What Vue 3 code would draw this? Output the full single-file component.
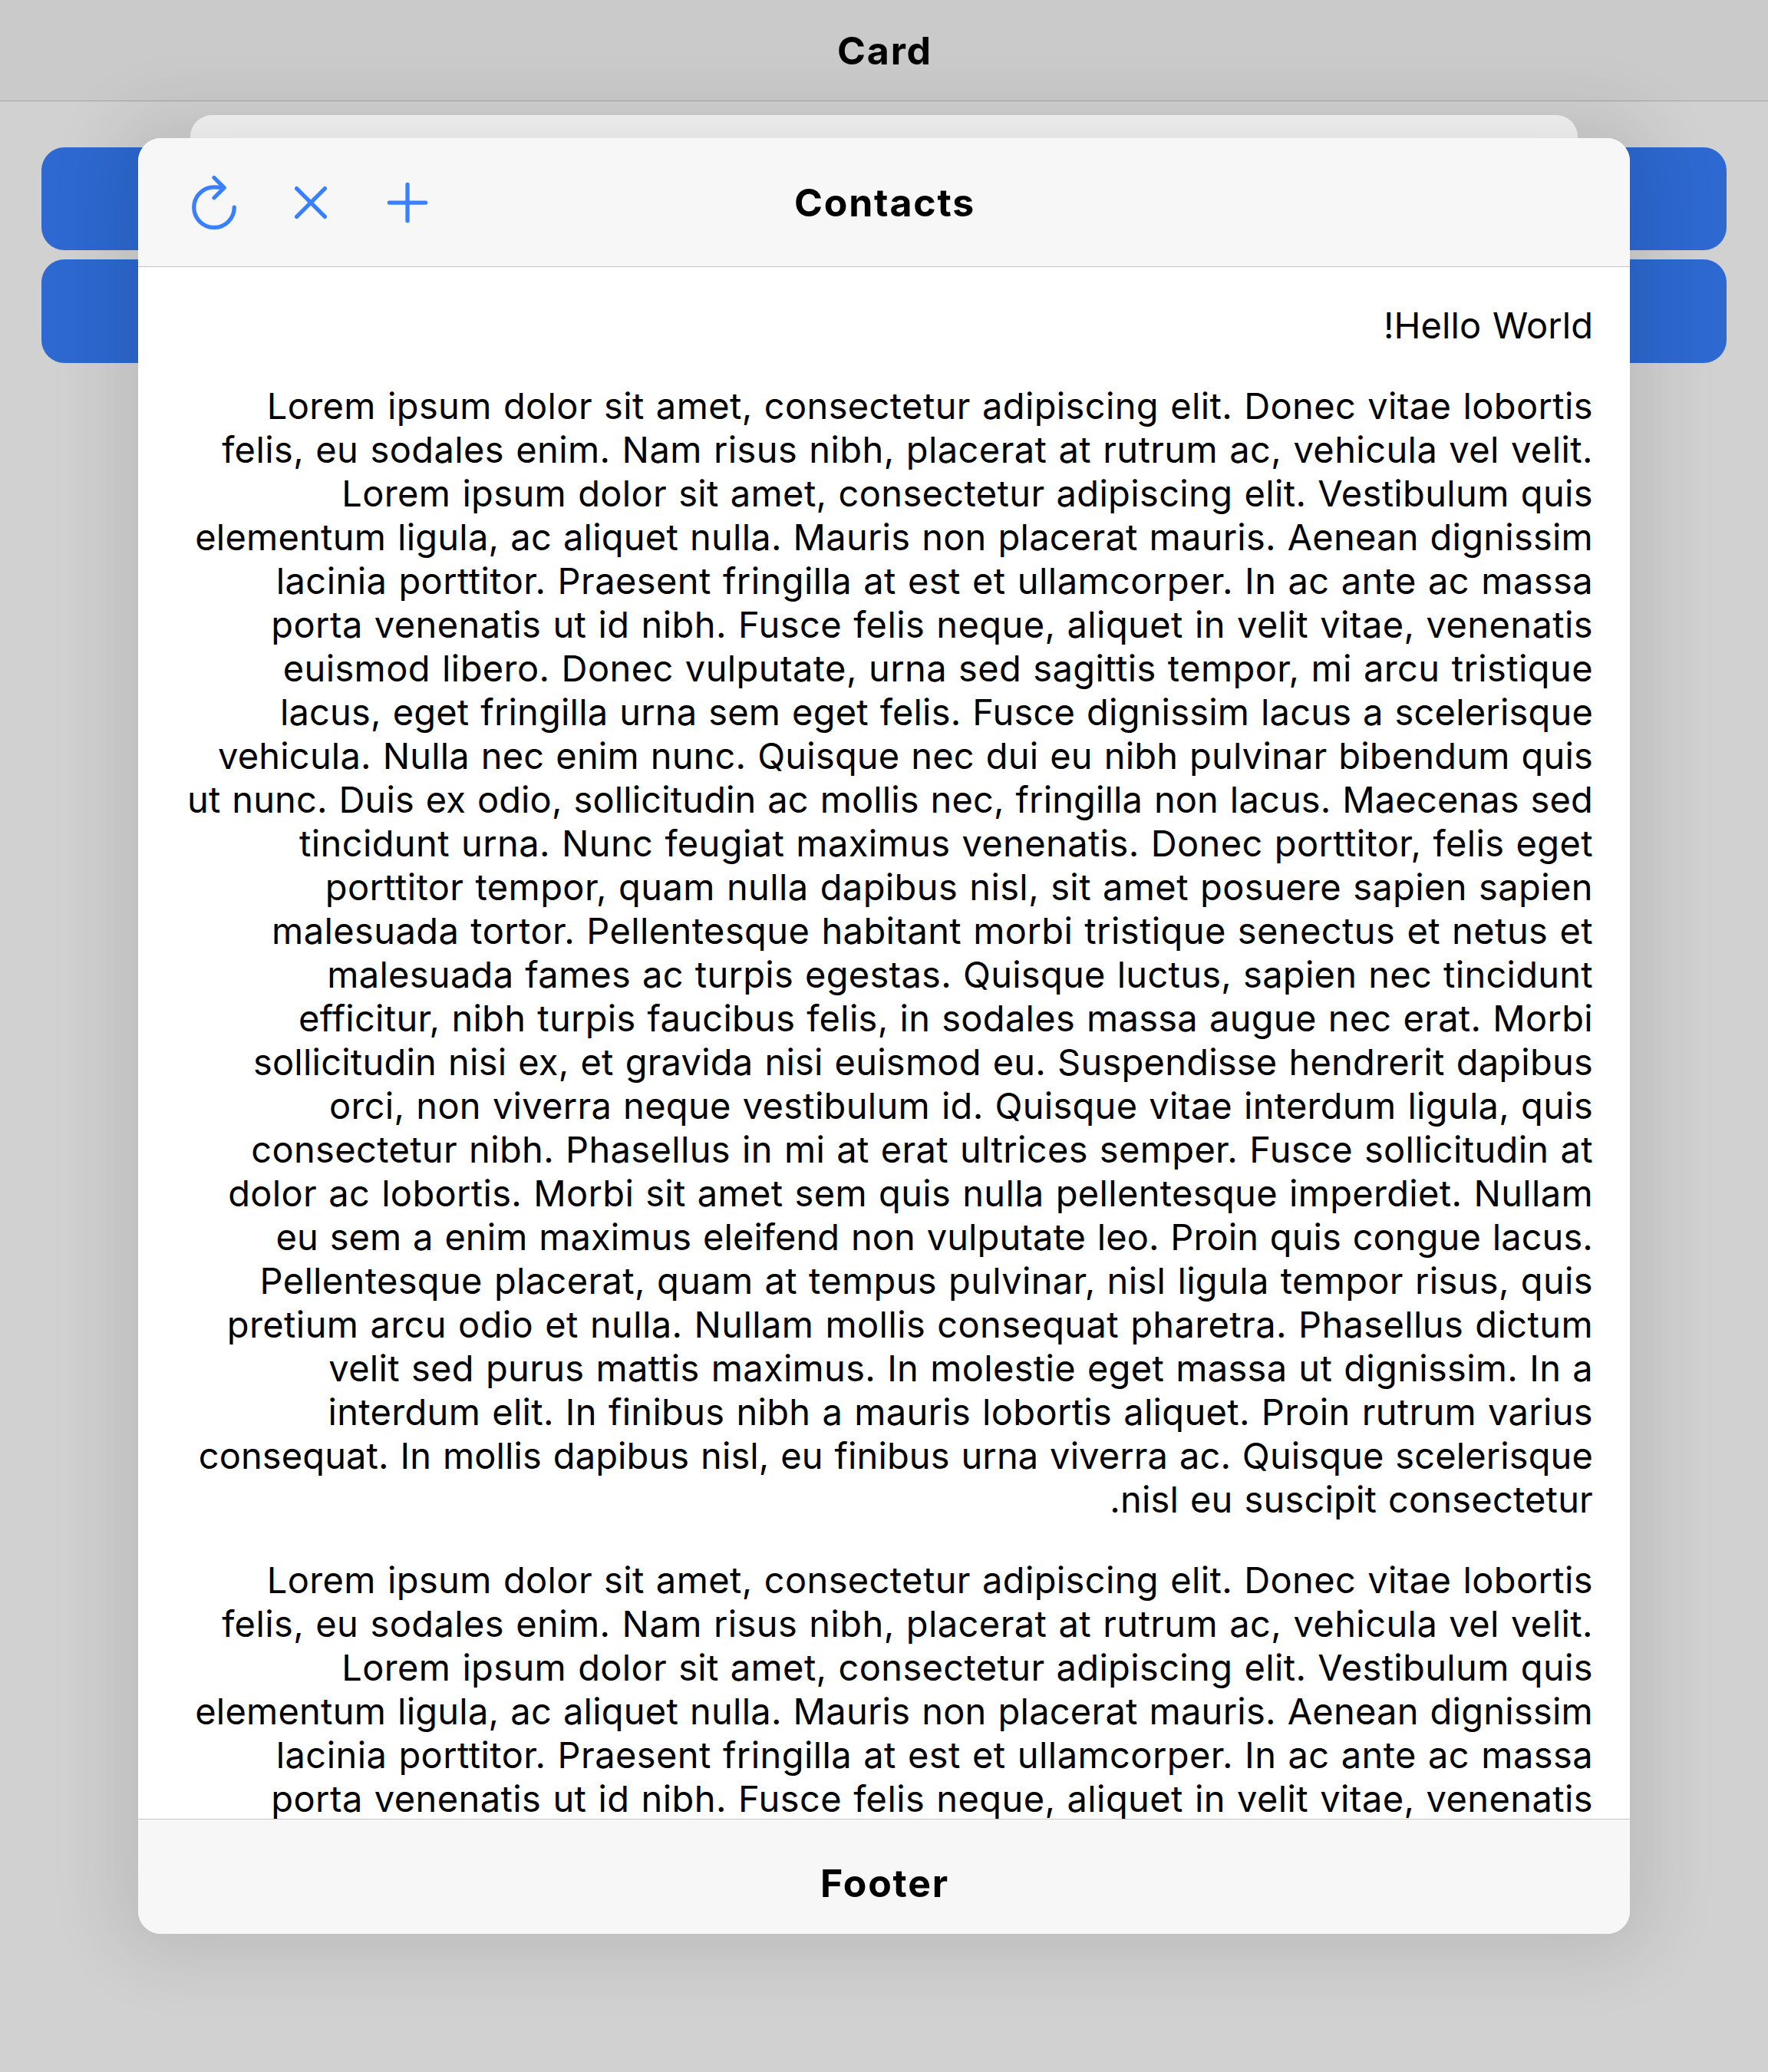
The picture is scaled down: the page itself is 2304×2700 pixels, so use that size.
<script setup>
// Each line carries its own tracking, in pixels.
const lines = [
  [0.375, 'Lorem ipsum dolor sit amet, consectetur adipiscing elit. Donec vitae lobortis'],
  [0.41, 'felis, eu sodales enim. Nam risus nibh, placerat at rutrum ac, vehicula vel velit.'],
  [0.35, 'Lorem ipsum dolor sit amet, consectetur adipiscing elit. Vestibulum quis'],
  [0.23, 'elementum ligula, ac aliquet nulla. Mauris non placerat mauris. Aenean dignissim'],
  [0.425, 'lacinia porttitor. Praesent fringilla at est et ullamcorper. In ac ante ac massa'],
  [0.405, 'porta venenatis ut id nibh. Fusce felis neque, aliquet in velit vitae, venenatis'],
  [0.4, 'euismod libero. Donec vulputate, urna sed sagittis tempor, mi arcu tristique'],
  [0.185, 'lacus, eget fringilla urna sem eget felis. Fusce dignissim lacus a scelerisque'],
  [0.185, 'vehicula. Nulla nec enim nunc. Quisque nec dui eu nibh pulvinar bibendum quis'],
  [0.13, 'ut nunc. Duis ex odio, sollicitudin ac mollis nec, fringilla non lacus. Maecenas sed'],
  [0.38, 'tincidunt urna. Nunc feugiat maximus venenatis. Donec porttitor, felis eget'],
  [0.39, 'porttitor tempor, quam nulla dapibus nisl, sit amet posuere sapien sapien'],
  [0.405, 'malesuada tortor. Pellentesque habitant morbi tristique senectus et netus et'],
  [0.27, 'malesuada fames ac turpis egestas. Quisque luctus, sapien nec tincidunt'],
  [0.285, 'efficitur, nibh turpis faucibus felis, in sodales massa augue nec erat. Morbi'],
  [0.23, 'sollicitudin nisi ex, et gravida nisi euismod eu. Suspendisse hendrerit dapibus'],
  [0.285, 'orci, non viverra neque vestibulum id. Quisque vitae interdum ligula, quis'],
  [0.34, 'consectetur nibh. Phasellus in mi at erat ultrices semper. Fusce sollicitudin at'],
  [0.335, 'dolor ac lobortis. Morbi sit amet sem quis nulla pellentesque imperdiet. Nullam'],
  [0.08, 'eu sem a enim maximus eleifend non vulputate leo. Proin quis congue lacus.'],
  [0.345, 'Pellentesque placerat, quam at tempus pulvinar, nisl ligula tempor risus, quis'],
  [0.385, 'pretium arcu odio et nulla. Nullam mollis consequat pharetra. Phasellus dictum'],
  [0.315, 'velit sed purus mattis maximus. In molestie eget massa ut dignissim. In a'],
  [0.315, 'interdum elit. In finibus nibh a mauris lobortis aliquet. Proin rutrum varius'],
  [0.11, 'consequat. In mollis dapibus nisl, eu finibus urna viverra ac. Quisque scelerisque'],
  [0.18, 'nisl eu suscipit consectetur.'],
]
// The second paragraph is only in view down to its sixth line.
const paragraphs = [lines, lines.slice(0, 6)]
</script>

<template>
  <div class="app">
    <div class="page">
      <header class="page-bar"><h1 class="title">Card</h1></header>
      <main class="page-body">
        <button class="action" aria-label="Show card"></button>
        <button class="action" aria-label="Show modal"></button>
      </main>
    </div>
    <div class="backdrop"></div>
    <div class="card card-behind"></div>
    <section class="card card-front">
      <header class="card-header">
        <div class="tools">
          <svg class="icon" viewBox="0 0 512 512">
            <path d="M320,146s24.36-12-64-12A160,160,0,1,0,416,294" />
            <polyline points="256 58 336 138 256 218" />
          </svg>
          <svg class="icon" viewBox="0 0 512 512">
            <path d="M368 368L144 144M368 144L144 368" />
          </svg>
          <svg class="icon" viewBox="0 0 512 512">
            <path d="M256 112V400M400 256H112" />
          </svg>
        </div>
        <h2 class="title">Contacts</h2>
        <div></div>
      </header>
      <div class="card-content" dir="rtl">
        <p class="hello">Hello World!</p>
        <p v-for="(paragraph, n) in paragraphs" :key="n">
          <template v-for="([tracking, text], i) in paragraph" :key="i">
            <span class="line" :style="{ letterSpacing: tracking + 'px' }">{{ text }}</span>{{ ' ' }}<wbr />
          </template>
        </p>
      </div>
      <footer class="card-footer"><h2 class="title">Footer</h2></footer>
    </section>
  </div>
</template>

<style>
body {
  margin: 0;
  overflow: hidden;
}
</style>

<style scoped>
.app {
  position: relative;
  width: 2304px;
  height: 2700px;
  overflow: hidden;
  background: #fff;
  color: #000;
  font-family: Inter, "Liberation Sans", sans-serif;
}
.page-bar {
  box-sizing: border-box;
  height: 132px;
  display: flex;
  align-items: center;
  justify-content: center;
  padding-top: 1px;
  background: #f7f7f7;
  border-bottom: 1px solid rgba(0, 0, 0, 0.2);
}
.title {
  margin: 0;
  padding-left: 2px;
  font-size: 50px;
  font-weight: 700;
  line-height: 60px;
  letter-spacing: 1.8px;
}
.page-body {
  display: flex;
  flex-direction: column;
  gap: 12px;
  padding: 60px 54px;
}
.action {
  height: 134px;
  padding: 0;
  border: 0;
  border-radius: 30px;
  background: #3880ff;
}
.action + .action {
  height: 135px;
}
.backdrop {
  position: absolute;
  inset: 0;
  background: rgba(0, 0, 0, 0.18);
}
.card {
  position: absolute;
  border-radius: 30px;
  overflow: hidden;
}
.card-behind {
  top: 150px;
  left: 248px;
  width: 1808px;
  height: 2256px;
  border-radius: 28px;
  background: #f7f7f7;
}
.card-front {
  top: 180px;
  left: 180px;
  width: 1944px;
  height: 2340px;
  display: flex;
  flex-direction: column;
  background: #fff;
  box-shadow: 0 0 90px 30px rgba(0, 0, 0, 0.1);
}
.card-header {
  box-sizing: border-box;
  flex: none;
  height: 168px;
  display: grid;
  grid-template-columns: 1fr auto 1fr;
  align-items: center;
  padding: 1px 57px 0;
  background: #f7f7f7;
  border-bottom: 1px solid rgba(0, 0, 0, 0.2);
}
.tools {
  display: flex;
  gap: 42px;
}
.icon {
  width: 84px;
  height: 84px;
  fill: none;
  stroke: #3880ff;
  stroke-width: 32;
  stroke-linecap: round;
  stroke-linejoin: round;
}
.card-content {
  flex: 1;
  min-height: 0;
  overflow: hidden;
  padding: 47px 48px 0;
  font-size: 47px;
  line-height: 57px;
  word-spacing: 1.5px;
}
.card-content p {
  margin: 0 0 48px;
}
.hello {
  letter-spacing: 0.07px;
}
.line {
  white-space: nowrap;
}
.card-footer {
  box-sizing: border-box;
  flex: none;
  height: 150px;
  display: flex;
  justify-content: center;
  padding-top: 53px;
  background: #f7f7f7;
  border-top: 1px solid rgba(0, 0, 0, 0.2);
}
</style>
